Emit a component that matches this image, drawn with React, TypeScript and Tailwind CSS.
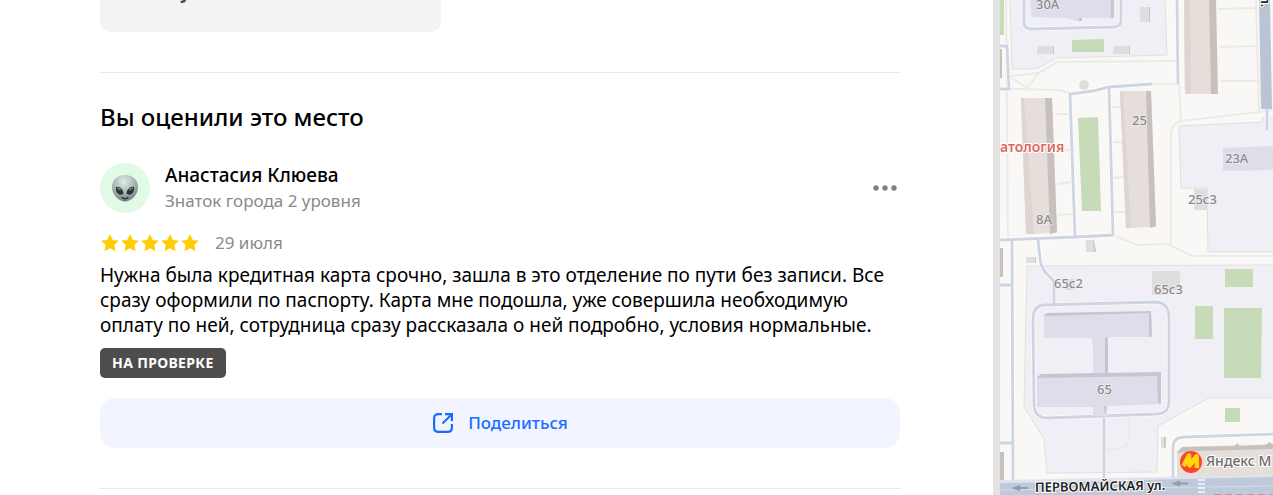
import { ReactNode } from 'react';

const STAR_PATH = 'M10 1.8l2.5 5.4 5.9.7-4.4 4 1.2 5.9L10 14.9 4.800 17.8l1.2-5.9L1.6 7.9l5.9-.7z';

interface PathsProps {
    children: ReactNode;
}

function AlienAvatar() {
    return (
        <div className="flex size-[50px] shrink-0 items-center justify-center rounded-full bg-[#e1fae6]">
            <svg className="size-7" viewBox="0 0 28 28" role="img" aria-label="Аватар">
                <defs>
                    <radialGradient id="alien" cx="45%" cy="25%" r="80%">
                        <stop offset="0" stopColor="#e3eaea" />
                        <stop offset="0.5" stopColor="#a9b8b7" />
                        <stop offset="1" stopColor="#667876" />
                    </radialGradient>
                </defs>
                <path d="M14 1C6 1 1 6.5 1 13c0 8 7 14.5 13 14.5S27 21 27 13C27 6.5 22 1 14 1z" fill="url(#alien)" />
                <path d="M5 13c3-1 7 2 7.5 6.5C10 22.5 4 20 5 13zM23 13c-3-1-7 2-7.5 6.5C18 22.5 24 20 23 13z" fill="#2c3032" />
                <path d="M6 14.5c1.5-.5 3 .5 3.5 2M22 14.5c-1.5-.5-3 .5-3.5 2" stroke="#777f80" strokeWidth="1.5" fill="none" />
                <path d="M11 23.5q3 2.5 6 0" stroke="#263030" strokeWidth="1.3" fill="none" strokeLinecap="round" />
            </svg>
        </div>
    );
}

function Rating({ value }: { value: number }) {
    return (
        <div className="flex" role="img" aria-label={`Оценка ${value} из 5`}>
            {Array.from({ length: value }, (_, i) => (
                <svg key={i} className="size-5" viewBox="0 0 20 20" fill="#ffcc00" stroke="#ffcc00" strokeWidth="0.6" strokeLinejoin="round">
                    <path d={STAR_PATH} />
                </svg>
            ))}
        </div>
    );
}

function Review() {
    return (
        <article>
            <header className="flex items-center">
                <AlienAvatar />
                <div className="ml-[15px] flex-1">
                    <h3 className="text-[19px] leading-[25px] font-medium">Анастасия Клюева</h3>
                    <p className="text-[17px] leading-[25px] text-[#8a8a8a]">Знаток города 2 уровня</p>
                </div>
                <button type="button" aria-label="Ещё" className="cursor-pointer">
                    <svg className="size-[30px]" viewBox="0 0 30 30" fill="#808080">
                        <circle cx="6" cy="15" r="2.7" />
                        <circle cx="15" cy="15" r="2.7" />
                        <circle cx="24" cy="15" r="2.7" />
                    </svg>
                </button>
            </header>

            <div className="mt-[17px] flex items-center gap-[15px]">
                <Rating value={5} />
                <time className="text-[17px] leading-[25px] text-[#8a8a8a]">29 июля</time>
            </div>

            <p className="mt-2 text-[19px] leading-[25px]">
                Нужна была кредитная карта срочно, зашла в это отделение по пути без записи. Все сразу оформили по
                паспорту. Карта мне подошла, уже совершила необходимую оплату по ней, сотрудница сразу рассказала о ней
                подробно, условия нормальные.
            </p>

            {/* Moderation status */}
            <span className="mt-[10px] flex h-[30px] w-fit items-center rounded-[5px] bg-[#4d4d4d] px-3 text-sm font-bold tracking-wide text-white">
                НА ПРОВЕРКЕ
            </span>

            <button
                type="button"
                className="mt-5 flex h-[50px] w-full cursor-pointer items-center justify-center gap-[14px] rounded-[15px] bg-[#f2f5ff] text-[17px] font-medium text-[#196dff]"
            >
                <svg className="size-[22px]" viewBox="0 0 22 22" fill="none" stroke="currentColor" strokeWidth="2.2">
                    <path d="M10 2.1H6.5Q2.1 2.1 2.1 6.5v9Q2.1 19.9 6.5 19.9h9Q19.9 19.9 19.9 15.5V12" />
                    <path d="M10.5 11.5L19 3" />
                    <path d="M13 2.1H19.9V9" />
                </svg>
                Поделиться
            </button>
        </article>
    );
}

// Light footpaths and yard passages
function Paths({ children }: PathsProps) {
    return <g fill="none" stroke="#ebeae7" strokeWidth="2">{children}</g>;
}

// Driveways with a soft outline
function Roads() {
    const d =
        'M24 0V22Q24 29 31 29L114 27Q121 27 121 20V0M177 0L178 84M0 46H7L9 89H0M152 84L109 87L93 91L70 94L75 237M109 87L113 235M0 240L75 237L114 235M12 240L13 480M0 285H13M0 443H13M38 240L40 259Q41 269 48 275L54 281V305M33 320Q33 306 43 305L155 302Q168 302 169 316V402Q169 413 157 414L48 418Q34 418 34 404ZM104 418V480M173 480V446Q174 437 185 437L273 434M267 109V130';
    return (
        <g fill="none">
            <path d={d} stroke="#fff" strokeOpacity="0.7" strokeWidth="4.5" />
            <path d={d} stroke="#cdd4e2" strokeWidth="2.8" />
        </g>
    );
}

function Map() {
    return (
        <svg
            className="h-[495px] w-full font-['Noto_Sans','Open_Sans',sans-serif]"
            viewBox="0 0 273 495"
            preserveAspectRatio="xMinYMin slice"
            role="img"
            aria-label="Карта"
        >
            <rect width="273" height="495" fill="#f9f8f6" />

            {/* School and hospital grounds */}
            <g fill="#f0eff5" stroke="#e4dfda" strokeWidth="1">
                <path d="M10 -1L12 69H36L57 58L167 55L165 -1Z" />
                <path d="M179 126L262 122V118H274V252H208L207 188H181Z" />
                <path d="M27 266L274 265V398H209L158 426L157 472L47 473L44 439L24 407Z" />
            </g>

            <Paths>
                <path d="M6 0L8 240M10 76L39 73L57 62L177 61M10 77L27 88L39 73M10 89L60 90L70 93M152 84H179L181 121L259 112M218 9L256 8M220 47L257 46M220 81H258M256 0L259 112L273 110M181 121Q171 124 171 135V244M115 236L137 245L168 244L192 256H273M56 114H69M56 150H70M57 184L72 182M58 215L73 214M112 107H121M112 142H123M112 178L124 177M113 212H126M129 418V438Q128 448 118 449L106 450" />
            </Paths>
            <Roads />

            {/* Lawns */}
            <g fill="#c7dbb8">
                <path d="M0 0H4V35H0zM72 40L104 39V52H72zM78 118L98 117L101 211H82zM225 269H253V287H225zM195 306H213V339H195zM224 308H262L261 378H224zM225 408H240V422H225z" />
            </g>

            {/* Small outbuildings */}
            <g fill="#dedede">
                <path d="M140 7H150V22H140zM37 46H54V54H37zM114 46H130V54H113zM194 189H207V210H194zM86 240H94L96 252H86zM26 257H36V263H26zM65 279H75V290H65zM152 271H180V290H165V295H152zM161 437H166V448H161z" />
                <circle cx="84" cy="85" r="5" />
            </g>
            <path d="M149 7h1v15h-1zM53 46h1v8h-1zM129 46h1v8h-1zM93 241h1l2 11h-2zM35 257h1v6h-1zM164 437h2v10h-2z" fill="#c8c8c8" />

            {/* Residential buildings */}
            <g fill="#e6deda">
                <path d="M184 0H216L217 94H185zM21 98H52L57 233L26 234zM120 91H151L156 227L126 228zM182 447L274 444V477L177 479V452z" />
            </g>
            <g fill="#ddd5cf">
                <path d="M184 0H190L191 94H185zM21 98H24L34 234H26zM120 91H123L131 228H126z" />
            </g>
            <g fill="#c8c1bb">
                <path d="M209 0H216L218 94H211zM45 98H52L57 232L50 234zM146 91H151L156 226L150 228zM177 452L182 447L235 446L237 443L240 446L266 445L269 442L274 445V449L198 451L177 453zM0 49H2V78H0zM0 248H3V277H0zM0 452H4V480H0z" />
            </g>

            {/* Public buildings */}
            <g fill="#dfdde9">
                <path d="M30 0H114V18H82V21H76L67 18L32 17zM223 148L273 146V170L223 171zM44 315L151 312L152 337L108 337V374L161 373V404L107 406V416H93V407L37 407V377L93 375V345L91 338L44 338z" />
            </g>
            <g fill="#c8c5d3">
                <path d="M111 0H114V18H111zM79 18H82V21H79zM44 315L47 313L151 311L152 337L149 336V313L46 316zM105 338L108 337V374H105zM37 377L41 374L161 372V404L158 403L157 376L37 378zM104 406H107L105 415z" />
            </g>

            {/* Street */}
            <path d="M259 0H270L272 109H261z" fill="#b9c4d5" />
            <path d="M0 480L273 475V478L0 483z" fill="#dfe4ec" />
            <path d="M0 483L273 477V495H0z" fill="#bec9da" />
            <path d="M0 490L273 486" stroke="#d3dbe7" />
            <g fill="#919baa">
                <path d="M11 488l9-3v2h8v2h-8v2zM171 483.5l9-3v2h8v2h-8v2z" />
            </g>
            <path d="M198 480h7M198 484h7M198 488h7M198 492h7" stroke="#e8edf4" strokeWidth="2" />
            <path d="M214 494.5H273" stroke="#cf6b7a" strokeWidth="0.6" strokeDasharray="7 4" />

            {/* House numbers */}
            <g fill="#8b898b" stroke="#fff" strokeOpacity="0.5" strokeWidth="1.5" paintOrder="stroke" fontSize="13" fontWeight="500">
                <text x="36" y="9">30А</text>
                <text x="132" y="125">25</text>
                <text x="36" y="224">8А</text>
                <text x="225" y="163">23А</text>
                <text x="188" y="204">25с3</text>
                <text x="54" y="288">65с2</text>
                <text x="154" y="294">65с3</text>
                <text x="97" y="394">65</text>
            </g>

            {/* Places and street names */}
            <g stroke="#fff" strokeWidth="2" paintOrder="stroke">
                <text x="0" y="152" fontSize="14" fontWeight="600" fill="#dd6a60">атология</text>
                <text x="206" y="466" fontSize="14" fontWeight="500" fill="#706c6c">Яндекс М</text>
                <text x="35" y="492" fontSize="13" fontWeight="600" fill="#222" transform="rotate(-1 35 492)">ПЕРВОМАЙСКАЯ ул.</text>
                <text x="7" y="-261" fontSize="12" fontWeight="600" fill="#222" textAnchor="end" transform="rotate(90)">л.</text>
            </g>
            <circle cx="191" cy="462" r="11" fill="#fc4528" />
            <path d="M183.500 466L189 455.500L189.500 465.500L196.500 456.500L197 468" fill="none" stroke="#ffd90c" strokeWidth="4.5" strokeLinejoin="round" />
        </svg>
    );
}

export default function App() {
    return (
        <div className="flex min-h-screen overflow-hidden bg-white font-['Noto_Sans','Open_Sans',sans-serif] text-black">
            <main className="min-w-0 flex-1 pr-[93px] pl-[100px]">
                <div className="h-8 w-[341px] max-w-full overflow-hidden rounded-b-[10px] bg-[#f3f3f3] pl-20">
                    <p className="-mt-5 text-lg leading-6 font-bold text-[#4d4d4d]">у</p>
                </div>

                <section className="mt-10 border-y border-[#e8e8e8] pt-[29px] pb-10">
                    <h2 className="mb-[31px] text-2xl leading-[30px] font-medium">Вы оценили это место</h2>
                    <Review />
                </section>
            </main>

            <aside className="w-[280px] shrink-0 border-l-[7px] border-[#e3e3e3]">
                <Map />
            </aside>
        </div>
    );
}
